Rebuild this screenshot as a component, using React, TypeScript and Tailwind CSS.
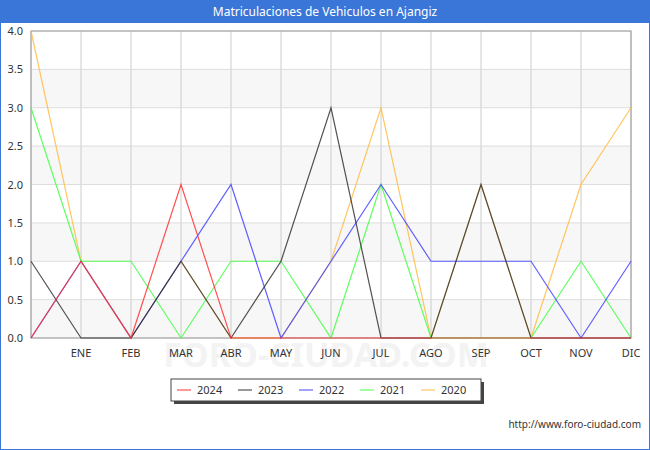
const X0 = 30, XS = 50, Y0 = 337, YU = 76.75;
const months = ["ENE","FEB","MAR","ABR","MAY","JUN","JUL","AGO","SEP","OCT","NOV","DIC"];
const series = [
  { name: "2024", color: "#ff3333", d: [0,1,0,2,0,0,0,0,0,0,0,0,0] },
  { name: "2023", color: "#333333", d: [1,0,0,1,0,1,3,0,0,2,0,0,0] },
  { name: "2022", color: "#4444ff", d: [0,1,0,1,2,0,1,2,1,1,1,0,1] },
  { name: "2021", color: "#44ff44", d: [3,1,1,0,1,1,0,2,0,0,0,1,0] },
  { name: "2020", color: "#ffbb44", d: [4,1,0,1,0,0,1,3,0,2,0,2,3] },
];
const pts = (d: number[]) => d.map((v, i) => `${X0 + i * XS},${Y0 - v * YU}`).join(" ");

export default function App() {
  return (
    <div className="w-[650px] h-[450px] border border-[#3a76d8] bg-white flex flex-col font-['DejaVu_Sans',sans-serif]">
      <div className="h-[22px] bg-[#3a76d8] text-white text-[12px] flex items-center justify-center shrink-0">Matriculaciones de Vehiculos en Ajangiz</div>
      <svg width="648" height="396" viewBox="0 22 648 396" className="shrink-0">
        <text x={325} y={366} fontSize="34" textAnchor="middle" fill="#f3f3f3" fontWeight="bold">FORO-CIUDAD.COM</text>
        {[0, 1, 2, 3].map((k) => (
          <rect key={k} x={30} y={Y0 - (k + 0.5) * YU} width={600} height={YU / 2} fill="#f7f7f7" />
        ))}
        {Array.from({ length: 13 }, (_, i) => (
          <line key={i} x1={X0 + i * XS} x2={X0 + i * XS} y1={30} y2={Y0} stroke="#cccccc" strokeWidth={1} />
        ))}
        {Array.from({ length: 9 }, (_, i) => (
          <g key={i}>
            <line x1={30} x2={630} y1={Y0 - i * YU / 2} y2={Y0 - i * YU / 2} stroke="#dddddd" />
            <text x={22} y={Y0 - i * YU / 2 + 4} fontSize="11" textAnchor="end" fill="#333">{(i / 2).toFixed(1)}</text>
          </g>
        ))}
        <rect x={30} y={30} width={600} height={307} fill="none" stroke="#999" />
        {months.map((m, i) => (
          <text key={m} x={80 + i * 50} y={356} fontSize="11" textAnchor="middle" fill="#333">{m}</text>
        ))}
        {series.slice().reverse().map((s) => (
          <polyline key={s.name} points={pts(s.d)} fill="none" stroke={s.color} strokeWidth={1.2} opacity={0.85} />
        ))}
        <rect x={173} y={381} width={310} height={22} fill="#444" />
        <rect x={170} y={378} width={310} height={22} fill="white" stroke="#444" />
        {series.map((s, i) => (
          <g key={s.name}>
            <line x1={176 + i * 61} x2={190 + i * 61} y1={389} y2={389} stroke={s.color} />
            <text x={196 + i * 61} y={393} fontSize="11" fill="#333">{s.name}</text>
          </g>
        ))}
      </svg>
      <div className="flex justify-end pr-[8px] text-[10px] text-[#333] leading-none">http://www.foro-ciudad.com</div>
    </div>
  );
}
